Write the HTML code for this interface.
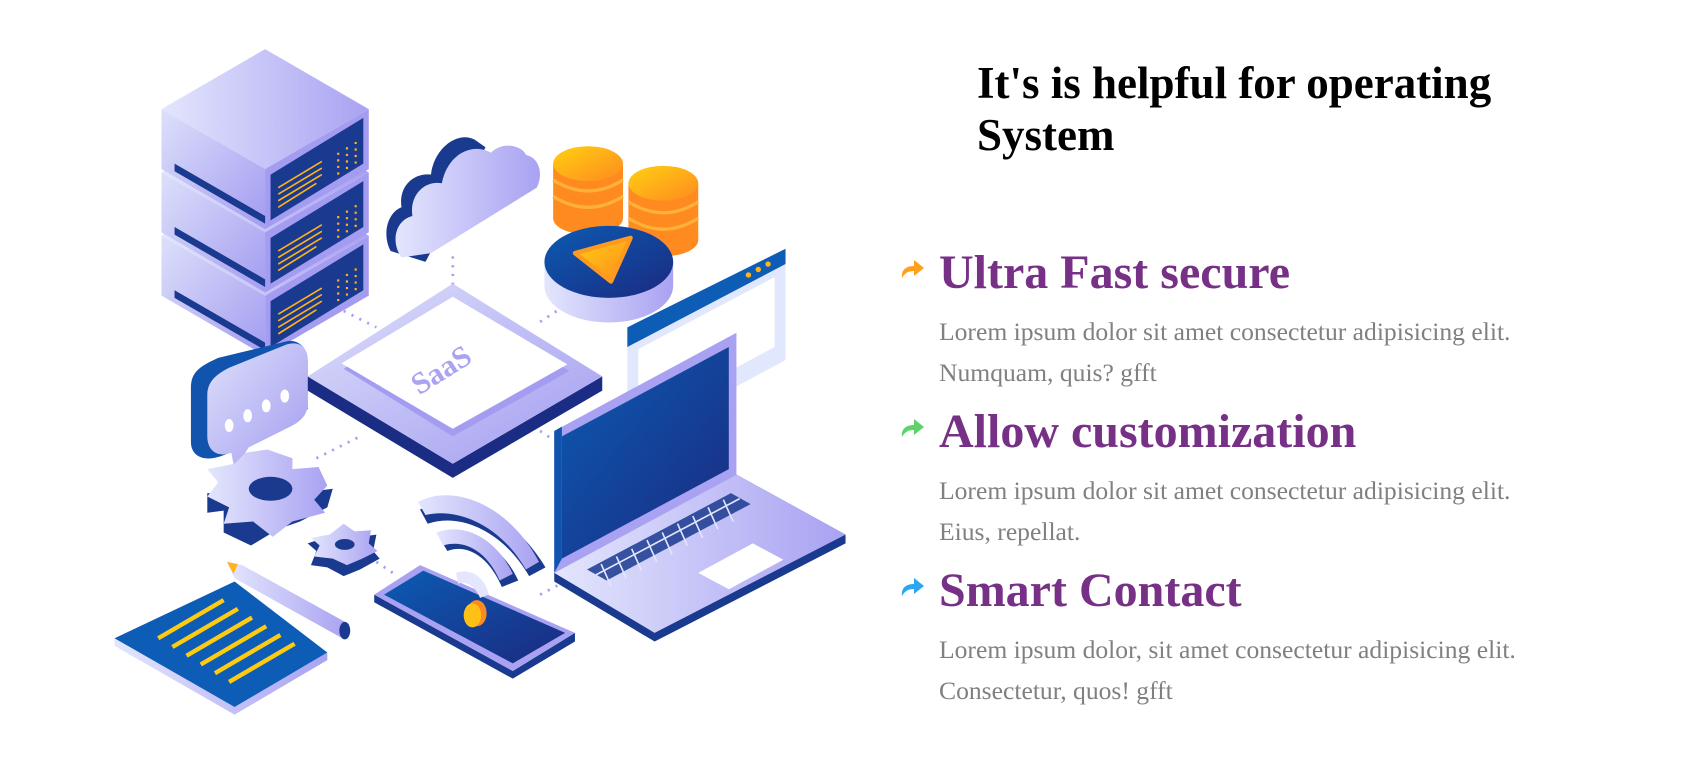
<!DOCTYPE html>
<html><head><meta charset="utf-8"><style>
html,body{margin:0;padding:0;background:#fff;width:1702px;height:775px;overflow:hidden;position:relative;font-family:"Liberation Serif",serif}
.a{position:absolute;white-space:nowrap}
h1{position:absolute;left:977px;top:57px;margin:0;font-size:45px;line-height:52px;font-weight:bold;color:#000}
.t{left:939px;font-size:48px;line-height:56px;font-weight:bold;color:#763085}
.b{left:939px;font-size:25.6px;line-height:41px;color:#808080}
.i{position:absolute;left:900px;width:26px;height:22px}
</style></head><body>
<svg class="a" style="left:0;top:0" width="1702" height="775" viewBox="0 0 1560 710.3" preserveAspectRatio="none">
<defs>
<linearGradient id="lav" x1="0" y1="0" x2="1" y2="1"><stop offset="0" stop-color="#dde0fb"/><stop offset="1" stop-color="#a39cf0"/></linearGradient>
<linearGradient id="lav2" x1="0" y1="0" x2="1" y2="0"><stop offset="0" stop-color="#e3e6fd"/><stop offset="1" stop-color="#a9a2f2"/></linearGradient>
<linearGradient id="blu" x1="0" y1="0" x2="1" y2="1"><stop offset="0" stop-color="#0c5bb3"/><stop offset="1" stop-color="#1b2a80"/></linearGradient>
<linearGradient id="org" x1="0" y1="0" x2="1" y2="1"><stop offset="0" stop-color="#ffd012"/><stop offset="1" stop-color="#ff8a1f"/></linearGradient>
</defs>
<!-- dotted connectors -->
<g stroke="#a99ff0" stroke-width="2.5" stroke-dasharray="2 6" fill="none">
<path d="M415 235 L415 290"/><path d="M315 285 L345 300"/><path d="M495 295 L515 282"/><path d="M290 420 L330 400"/><path d="M495 395 L510 405"/><path d="M345 515 L360 525"/><path d="M495 545 L520 532"/>
</g>
<!-- server stack -->
<g>
<g transform="translate(0,116)"><path d="M148 100 L243 155 L243 210 L148 155Z" fill="url(#lav)"/><path d="M243 155 L338 100 L338 155 L243 210Z" fill="#a49cf0"/><path d="M248 160 L333 108 L333 150 L248 202Z" fill="#1a3a8f"/><path d="M148 100 L243 45 L338 100 L243 155Z" fill="url(#lav2)"/><path d="M160 150 L243 198 L243 205 L160 157Z" fill="#1a3a8f"/></g>
<g transform="translate(0,58)"><path d="M148 100 L243 155 L243 210 L148 155Z" fill="url(#lav)"/><path d="M243 155 L338 100 L338 155 L243 210Z" fill="#a49cf0"/><path d="M248 160 L333 108 L333 150 L248 202Z" fill="#1a3a8f"/><path d="M148 100 L243 45 L338 100 L243 155Z" fill="url(#lav2)"/><path d="M160 150 L243 198 L243 205 L160 157Z" fill="#1a3a8f"/></g>
<g><path d="M148 100 L243 155 L243 210 L148 155Z" fill="url(#lav)"/><path d="M243 155 L338 100 L338 155 L243 210Z" fill="#a49cf0"/><path d="M248 160 L333 108 L333 150 L248 202Z" fill="#1a3a8f"/><path d="M148 100 L243 45 L338 100 L243 155Z" fill="url(#lav2)"/><path d="M160 150 L243 198 L243 205 L160 157Z" fill="#1a3a8f"/></g>
<g stroke="#ffb21a" stroke-width="1.5">
<path d="M255 172 L295 148 M255 178 L295 154 M255 184 L295 160 M255 190 L290 168"/>
<path d="M255 230 L295 206 M255 236 L295 212 M255 242 L295 218 M255 248 L290 226"/>
<path d="M255 288 L295 264 M255 294 L295 270 M255 300 L295 276 M255 306 L290 284"/>
</g>
<g stroke="#ffb21a" stroke-width="2" stroke-dasharray="2 4"><path d="M310 140 L310 160 M318 135 L318 155 M326 130 L326 150"/><path d="M310 198 L310 218 M318 193 L318 213 M326 188 L326 208"/><path d="M310 256 L310 276 M318 251 L318 271 M326 246 L326 266"/></g>
</g>
<!-- cloud -->
<path d="M358 230 C350 215 355 195 368 190 C365 170 380 158 395 160 C398 135 420 120 435 128 L445 135 L390 240Z" fill="#1a3a8f"/>
<path d="M368 236 C358 222 362 202 378 198 C375 178 390 165 405 168 C410 142 432 130 450 140 C462 128 480 135 482 142 C495 145 498 160 492 172 L395 232Z" fill="url(#lav2)"/>
<!-- coins -->
<g><rect x="507" y="150" width="64" height="50" fill="#ff8a1f"/><ellipse cx="539" cy="200" rx="32" ry="15" fill="#ff8a1f"/><path d="M507 165 Q539 185 571 165 M507 180 Q539 200 571 180" stroke="#ffb23a" stroke-width="3" fill="none"/><ellipse cx="539" cy="150" rx="32" ry="16" fill="url(#org)"/></g>
<g><rect x="576" y="168" width="64" height="52" fill="#ff8a1f"/><ellipse cx="608" cy="220" rx="32" ry="15" fill="#ff8a1f"/><path d="M576 185 Q608 205 640 185 M576 200 Q608 220 640 200" stroke="#ffb23a" stroke-width="3" fill="none"/><ellipse cx="608" cy="168" rx="32" ry="16" fill="url(#org)"/></g>
<!-- play disc -->
<path d="M499 240 L499 262 A58 33 0 0 0 617 262 L617 240Z" fill="url(#lav2)"/>
<ellipse cx="558" cy="240" rx="59" ry="33" fill="url(#blu)"/>
<path d="M527 232 L578 218 L560 258Z" fill="url(#org)" stroke="#ff9a20" stroke-width="4" stroke-linejoin="round"/>
<!-- browser -->
<path d="M575 305 L720 228 L720 330 L575 408Z" fill="#e1e8fd"/>
<path d="M585 320 L710 254 L710 318 L585 385Z" fill="#fff"/>
<path d="M575 300 L720 228 L720 242 L575 318Z" fill="#0d5cb5"/>
<g fill="#ffb21a"><circle cx="686" cy="252" r="2.5"/><circle cx="695" cy="247" r="2.5"/><circle cx="704" cy="242" r="2.5"/></g>
<!-- saas platform -->
<path d="M282 345 L415 425 L552 345 L552 358 L415 438 L282 358Z" fill="#1a2c84"/>
<path d="M282 345 L415 260 L552 345 L415 425Z" fill="url(#lav)"/>
<path d="M315 338 L415 278 L522 340 L415 400Z" fill="#a49cf0"/>
<path d="M313 333 L415 272 L520 334 L415 393Z" fill="#fff"/>
<text x="405" y="348" transform="rotate(-32 405 340)" font-family="Liberation Serif,serif" font-weight="bold" font-size="28" fill="#aaa3f2" text-anchor="middle">SaaS</text>
<!-- chat -->
<path d="M175 355 C175 340 185 335 200 328 L262 313 C272 310 282 318 282 330 L282 375 L210 415 C190 425 175 420 175 405Z" fill="#1054ad"/>
<path d="M190 362 C190 350 198 343 210 337 L262 316 C274 312 282 318 282 330 L282 370 C282 380 276 386 266 391 L228 410 L215 430 L212 415 C198 420 190 412 190 400Z" fill="url(#lav)"/>
<g fill="#fff"><ellipse cx="210" cy="390" rx="4" ry="6"/><ellipse cx="227" cy="381" rx="4" ry="6"/><ellipse cx="244" cy="372" rx="4" ry="6"/><ellipse cx="261" cy="363" rx="4" ry="6"/></g>
<!-- big gear -->
<path d="M190 452 L190 470 L205 468 L205 488 L230 500 L255 485 L275 478 L300 465 L305 448 L250 455Z" fill="#1a3a8f"/>
<path d="M245 412 L268 420 L268 430 L292 428 L300 445 L288 458 L298 470 L268 478 L250 492 L232 478 L205 480 L210 465 L190 455 L200 442 L190 430 L215 425 L225 415Z" fill="url(#lav2)"/>
<ellipse cx="248" cy="448" rx="20" ry="11" fill="#1a3a8f"/>
<!-- small gear -->
<path d="M315 485 L330 492 L345 490 L342 505 L348 512 L330 522 L315 528 L300 520 L285 518 L290 505 L282 498 L300 492Z" fill="#1a3a8f"/>
<path d="M315 480 L325 487 L340 486 L338 498 L346 505 L332 512 L318 518 L305 512 L288 510 L293 500 L285 493 L302 490Z" fill="url(#lav2)"/>
<ellipse cx="316" cy="499" rx="9" ry="5" fill="#1a3a8f"/>
<!-- pencil -->
<path d="M208 515 L222 518 L320 572 L312 584 L215 530Z" fill="url(#lav2)"/>
<path d="M208 515 L218 517 L214 526Z" fill="#ffb21a"/>
<ellipse cx="316" cy="578" rx="5" ry="8" fill="#1a3a8f"/>
<!-- notepad -->
<path d="M105 585 L215 648 L300 598 L300 605 L215 655 L105 592Z" fill="url(#lav2)"/>
<path d="M105 585 L215 533 L300 598 L215 648Z" fill="#0d5cb5"/>
<g stroke="#ffcb12" stroke-width="4"><path d="M145 585 L205 550 M158 593 L218 558 M171 601 L231 566 M184 609 L244 574 M197 617 L257 582 M210 625 L270 590"/></g>
<!-- wifi arcs -->
<path d="M385 467 C420 448 470 470 500 520 L485 528 C460 485 420 470 392 480Z" fill="#1a3a8f"/>
<path d="M383 460 C418 442 468 465 494 515 L482 522 C458 480 418 465 390 472Z" fill="url(#lav2)"/>
<path d="M403 493 C430 482 460 500 475 532 L460 538 C448 510 428 498 410 505Z" fill="#1a3a8f"/>
<path d="M400 488 C428 478 456 496 470 526 L458 532 C446 505 426 494 406 500Z" fill="url(#lav2)"/>
<!-- phone -->
<path d="M343 545 L470 615 L527 580 L527 588 L470 622 L343 552Z" fill="#1a3a8f"/>
<path d="M343 545 L385 518 L527 580 L470 615Z" fill="#a9a2f2"/>
<path d="M352 545 L388 523 L518 580 L470 608Z" fill="url(#blu)"/>
<path d="M418 525 C432 520 445 530 448 545 L440 548 C436 538 428 532 420 535Z" fill="#e3e6fd"/>
<ellipse cx="437" cy="562" rx="9" ry="12" fill="#ff8a1f"/><ellipse cx="433" cy="564" rx="8" ry="11" fill="#ffc115"/>
<!-- laptop -->
<path d="M508 525 L675 435 L775 490 L775 498 L600 588 L508 533Z" fill="#1a3a8f"/>
<path d="M508 525 L675 435 L775 490 L600 580Z" fill="url(#lav2)"/>
<path d="M640 525 L690 498 L718 513 L668 540Z" fill="#fff"/>
<g fill="#1a3a8f">
<path d="M538 522 L670 452 L688 462 L556 532Z" opacity=".85"/>
</g>
<g stroke="#e3e6fd" stroke-width="1.5"><path d="M546 527 L678 457 M551 517 L560 537 M565 510 L574 530 M579 503 L588 523 M593 495 L602 515 M607 488 L616 508 M621 480 L630 500 M635 473 L644 493 M649 465 L658 485 M663 458 L672 478"/></g>
<path d="M508 395 L675 305 L675 435 L508 525Z" fill="#a9a2f2"/>
<path d="M515 400 L668 318 L668 430 L515 512Z" fill="url(#blu)"/>
<path d="M508 395 L515 391 L515 512 L508 525Z" fill="#1054ad"/>
</svg>

<h1>It's is helpful for operating<br>System</h1>

<svg class="i" style="top:258px" viewBox="0 0 26 22"><path d="M2 20 C1 12 6 8 14 8 L14 2 L24 10 L14 18 L14 13 C8 13 5 15 2 20Z" fill="#ff9f1a"/></svg>
<div class="a t" style="top:245px">Ultra Fast secure</div>
<div class="a b" style="top:311px">Lorem ipsum dolor sit amet consectetur adipisicing elit.<br>Numquam, quis? gfft</div>

<svg class="i" style="top:417px" viewBox="0 0 26 22"><path d="M2 20 C1 12 6 8 14 8 L14 2 L24 10 L14 18 L14 13 C8 13 5 15 2 20Z" fill="#5fd36b"/></svg>
<div class="a t" style="top:404px">Allow customization</div>
<div class="a b" style="top:470px">Lorem ipsum dolor sit amet consectetur adipisicing elit.<br>Eius, repellat.</div>

<svg class="i" style="top:576px" viewBox="0 0 26 22"><path d="M2 20 C1 12 6 8 14 8 L14 2 L24 10 L14 18 L14 13 C8 13 5 15 2 20Z" fill="#2aa7ef"/></svg>
<div class="a t" style="top:563px">Smart Contact</div>
<div class="a b" style="top:629px">Lorem ipsum dolor, sit amet consectetur adipisicing elit.<br>Consectetur, quos! gfft</div>
</body></html>
